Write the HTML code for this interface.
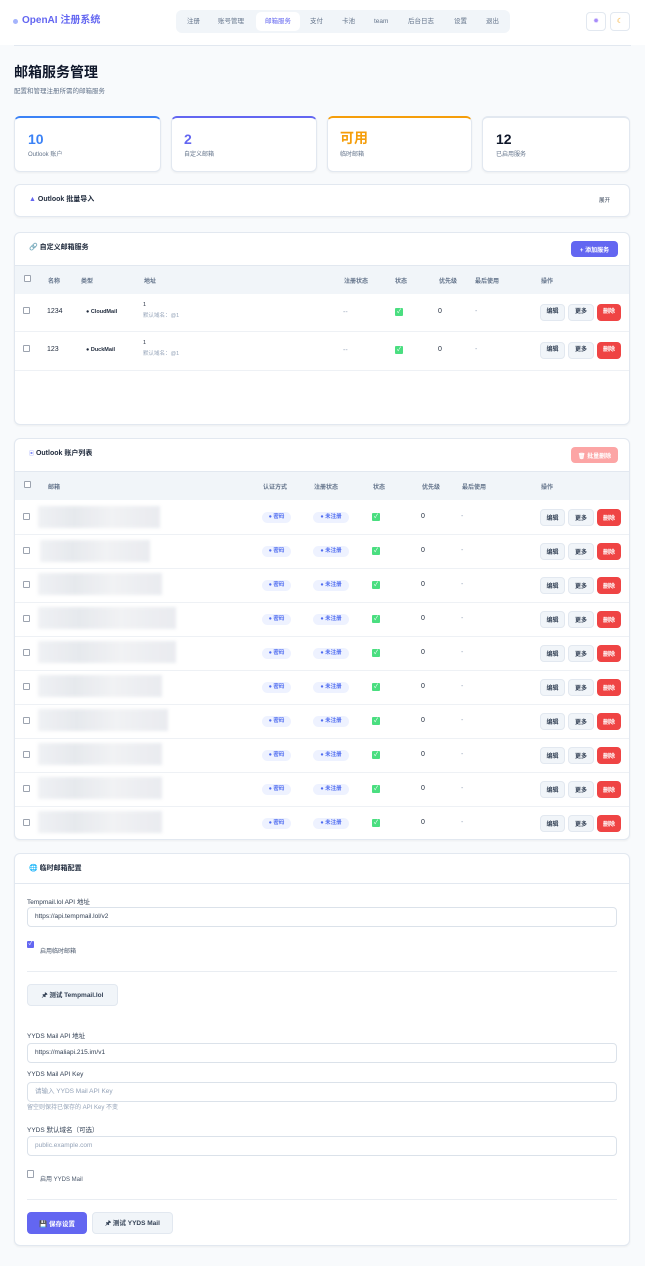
<!DOCTYPE html><html><head><meta charset="utf-8"><style>
*{box-sizing:border-box;margin:0;padding:0}
body{width:645px;height:1266px;background:#f8fafc;font-family:"Liberation Sans","Noto Sans CJK SC",sans-serif;color:#1e293b;position:relative;overflow:hidden;font-size:7px}
.a{position:absolute;white-space:nowrap;line-height:1.2}
.card{position:absolute;background:#fff;border:1px solid #e2e8f0;border-radius:6px;box-shadow:0 1px 2px rgba(0,0,0,.05)}
.th{position:absolute;font-size:6px;color:#64748b;font-weight:bold;white-space:nowrap}
.cb{position:absolute;width:7px;height:7px;border:1px solid #9ca3af;border-radius:1px;background:#fff}
.btn{position:absolute;height:17px;border-radius:4px;font-size:6px;font-weight:bold;display:flex;align-items:center;justify-content:center;white-space:nowrap}
.ed{background:#f1f5f9;border:1px solid #e2e8f0;color:#334155}
.del{background:#ef4444;color:#fff}
.chk{position:absolute;width:8px;height:8px;background:#4ade80;border-radius:1px;color:#fff;font-size:6px;line-height:8px;text-align:center}
.badge{position:absolute;height:11px;border-radius:6px;background:#eef2ff;color:#4f6cf0;font-size:5.5px;font-weight:bold;line-height:11px;text-align:center;white-space:nowrap}
.blur{position:absolute;height:22px;background:linear-gradient(90deg,#eef0f3,#e4e7ec 30%,#f0f1f3 60%,#e7e9ee);filter:blur(1.5px);opacity:.9}
.inp{position:absolute;left:27px;width:590px;height:20px;border:1px solid #dbe2ea;border-radius:4px;background:#fff;font-size:6.5px;padding-left:7px;line-height:18px;color:#334155;white-space:nowrap}
.lbl{position:absolute;left:27px;font-size:6.5px;color:#334155;white-space:nowrap}
.hr{position:absolute;left:27px;width:590px;height:1px;background:#e9edf2}
</style></head><body>
<div class="a" style="left:0;top:0;width:645px;height:45px;background:#fff"></div>
<div class="a" style="left:14px;top:45px;width:617px;height:1px;background:#e2e8f0"></div>
<div class="a" style="left:13px;top:19px;width:5px;height:5px;border-radius:50%;background:#a5b4fc"></div>
<div class="a" style="left:22px;top:15px;font-size:10px;font-weight:bold;color:#6366f1">OpenAI 注册系统</div>
<div class="a" style="left:176px;top:10px;width:334px;height:23px;background:#f1f5f9;border-radius:6px"></div>
<div class="a" style="left:256px;top:12px;width:44px;height:19px;background:#fff;border-radius:5px"></div>
<div class="a" style="top:18px;left:0;width:645px;height:10px;font-size:6.5px;color:#64748b">
<span class="a" style="left:187px;top:0">注册</span><span class="a" style="left:218px;top:0">账号管理</span><span class="a" style="left:265px;top:0;color:#6366f1">邮箱服务</span><span class="a" style="left:310px;top:0">支付</span><span class="a" style="left:342px;top:0">卡池</span><span class="a" style="left:374px;top:0">team</span><span class="a" style="left:408px;top:0">后台日志</span><span class="a" style="left:454px;top:0">设置</span><span class="a" style="left:486px;top:0">退出</span></div>
<div class="a" style="left:586px;top:12px;width:20px;height:19px;border:1px solid #e2e8f0;border-radius:4px;background:#fff;font-size:7px;text-align:center;line-height:17px;color:#a78bfa">✹</div>
<div class="a" style="left:610px;top:12px;width:20px;height:19px;border:1px solid #e2e8f0;border-radius:4px;background:#fff;font-size:7px;text-align:center;line-height:17px;color:#f59e0b">☾</div>

<div class="a" style="left:14px;top:64px;font-size:14px;font-weight:bold;color:#0f172a">邮箱服务管理</div>
<div class="a" style="left:14px;top:88px;font-size:6.5px;color:#64748b">配置和管理注册所需的邮箱服务</div>

<div class="card" style="left:14px;top:116px;width:147px;height:56px;border-top:2px solid #3b82f6"><div class="a" style="left:13px;top:13px;font-size:14px;font-weight:bold;color:#3b82f6">10</div><div class="a" style="left:13px;top:34px;font-size:6px;color:#64748b">Outlook 账户</div></div>
<div class="card" style="left:171px;top:116px;width:146px;height:56px;border-top:2px solid #6366f1"><div class="a" style="left:12px;top:13px;font-size:14px;font-weight:bold;color:#6366f1">2</div><div class="a" style="left:12px;top:34px;font-size:6px;color:#64748b">自定义邮箱</div></div>
<div class="card" style="left:327px;top:116px;width:145px;height:56px;border-top:2px solid #f59e0b"><div class="a" style="left:12px;top:12px;font-size:14px;font-weight:bold;color:#f59e0b">可用</div><div class="a" style="left:12px;top:34px;font-size:6px;color:#64748b">临时邮箱</div></div>
<div class="card" style="left:482px;top:116px;width:148px;height:56px;border-top:2px solid #e2e8f0"><div class="a" style="left:13px;top:13px;font-size:14px;font-weight:bold;color:#0f172a">12</div><div class="a" style="left:13px;top:34px;font-size:6px;color:#64748b">已启用服务</div></div>

<div class="card" style="left:14px;top:184px;width:616px;height:33px"><div class="a" style="left:14px;top:11px;font-size:7px;font-weight:bold;color:#1e293b"><span style="color:#6366f1">▲</span> Outlook 批量导入</div><div class="a" style="left:584px;top:13px;font-size:5.5px;color:#334155">展开</div></div>

<!-- custom -->
<div class="card" style="left:14px;top:232px;width:616px;height:193px;overflow:hidden">
<div class="a" style="left:14px;top:11px;font-size:7px;font-weight:bold"><span style="color:#c4b5fd">🔗</span> 自定义邮箱服务</div>
<div class="btn" style="left:556px;top:8px;width:47px;height:16px;background:#6366f1;color:#fff">+ 添加服务</div>
<div class="a" style="left:0;top:32px;width:616px;height:29px;background:#f1f5f9;border-top:1px solid #e2e8f0"></div>
<div class="cb" style="left:9px;top:42px"></div>
<div class="th" style="left:33px;top:43px">名称</div><div class="th" style="left:66px;top:43px">类型</div><div class="th" style="left:129px;top:43px">地址</div><div class="th" style="left:329px;top:43px">注册状态</div><div class="th" style="left:380px;top:43px">状态</div><div class="th" style="left:424px;top:43px">优先级</div><div class="th" style="left:460px;top:43px">最后使用</div><div class="th" style="left:526px;top:43px">操作</div>
<div class="a" style="left:0;top:98px;width:616px;height:1px;background:#eef1f5"></div>
<div class="a" style="left:0;top:137px;width:616px;height:1px;background:#eef1f5"></div>
</div>
<div class="a" style="left:0;top:0">
<div class="cb" style="left:23px;top:307px"></div><div class="a" style="left:47px;top:308px;font-size:7px">1234</div><div class="a" style="left:86px;top:309px;font-size:5.5px;font-weight:bold">● CloudMail</div><div class="a" style="left:143px;top:302px;font-size:5.5px">1</div><div class="a" style="left:143px;top:313px;font-size:5.5px;color:#94a3b8">默认域名：@1</div><div class="a" style="left:343px;top:309px;color:#94a3b8">--</div><div class="chk" style="left:395px;top:308px">✓</div><div class="a" style="left:438px;top:308px;font-size:7px">0</div><div class="a" style="left:475px;top:308px;color:#94a3b8">-</div>
<div class="btn ed" style="left:540px;top:304px;width:25px">编辑</div><div class="btn ed" style="left:568px;top:304px;width:26px">更多</div><div class="btn del" style="left:597px;top:304px;width:24px">删除</div>
<div class="cb" style="left:23px;top:345px"></div><div class="a" style="left:47px;top:346px;font-size:7px">123</div><div class="a" style="left:86px;top:347px;font-size:5.5px;font-weight:bold">● DuckMail</div><div class="a" style="left:143px;top:340px;font-size:5.5px">1</div><div class="a" style="left:143px;top:351px;font-size:5.5px;color:#94a3b8">默认域名：@1</div><div class="a" style="left:343px;top:347px;color:#94a3b8">--</div><div class="chk" style="left:395px;top:346px">✓</div><div class="a" style="left:438px;top:346px;font-size:7px">0</div><div class="a" style="left:475px;top:346px;color:#94a3b8">-</div>
<div class="btn ed" style="left:540px;top:342px;width:25px">编辑</div><div class="btn ed" style="left:568px;top:342px;width:26px">更多</div><div class="btn del" style="left:597px;top:342px;width:24px">删除</div>
</div>

<!-- outlook list -->
<div class="card" style="left:14px;top:438px;width:616px;height:402px;overflow:hidden">
<div class="a" style="left:14px;top:11px;font-size:7px;font-weight:bold"><span style="color:#818cf8;font-size:5px">▣</span> Outlook 账户列表</div>
<div class="btn" style="left:556px;top:8px;width:47px;height:16px;background:#fca5a5;color:#fff">🗑 批量删除</div>
<div class="a" style="left:0;top:32px;width:616px;height:29px;background:#f1f5f9;border-top:1px solid #e2e8f0"></div>
<div class="cb" style="left:9px;top:42px"></div>
<div class="th" style="left:33px;top:43px">邮箱</div><div class="th" style="left:248px;top:43px">认证方式</div><div class="th" style="left:299px;top:43px">注册状态</div><div class="th" style="left:358px;top:43px">状态</div><div class="th" style="left:407px;top:43px">优先级</div><div class="th" style="left:447px;top:43px">最后使用</div><div class="th" style="left:526px;top:43px">操作</div>
</div>
<div id="rows"></div>

<!-- temp config -->
<div class="card" style="left:14px;top:853px;width:616px;height:393px">
<div class="a" style="left:14px;top:11px;font-size:7px;font-weight:bold"><span style="color:#38bdf8">🌐</span> 临时邮箱配置</div>
<div class="a" style="left:0;top:29px;width:614px;height:1px;background:#e2e8f0"></div>
</div>
<div class="lbl" style="top:896px">Tempmail.lol API 地址</div>
<div class="inp" style="top:907px">https://api.tempmail.lol/v2</div>
<div class="a" style="left:27px;top:941px;width:7px;height:7px;background:#6366f1;border-radius:1px;color:#fff;font-size:6px;line-height:7px;text-align:center">✓</div>
<div class="a" style="left:40px;top:949px;font-size:6px;color:#475569">启用临时邮箱</div>
<div class="hr" style="top:971px"></div>
<div class="btn ed" style="left:27px;top:984px;width:91px;height:22px;font-size:6.5px">🖈 测试 Tempmail.lol</div>
<div class="lbl" style="top:1030px">YYDS Mail API 地址</div>
<div class="inp" style="top:1043px">https://maliapi.215.im/v1</div>
<div class="lbl" style="top:1071px">YYDS Mail API Key</div>
<div class="inp" style="top:1082px;color:#94a3b8">请输入 YYDS Mail API Key</div>
<div class="a" style="left:27px;top:1105px;font-size:6px;color:#94a3b8">留空则保持已保存的 API Key 不变</div>
<div class="lbl" style="top:1124px">YYDS 默认域名（可选）</div>
<div class="inp" style="top:1136px;color:#94a3b8">public.example.com</div>
<div class="cb" style="left:27px;top:1170px;width:7px;height:8px"></div>
<div class="a" style="left:40px;top:1177px;font-size:6px;color:#475569">启用 YYDS Mail</div>
<div class="hr" style="top:1199px"></div>
<div class="btn" style="left:27px;top:1212px;width:60px;height:22px;background:#6366f1;color:#fff;font-size:6.5px">💾 保存设置</div>
<div class="btn ed" style="left:92px;top:1212px;width:81px;height:22px;font-size:6.5px">🖈 测试 YYDS Mail</div>

<div class="a" style="left:0;top:0">
<div class="blur" style="left:38px;top:506px;width:122px"></div>
<div class="blur" style="left:40px;top:540px;width:110px"></div>
<div class="blur" style="left:38px;top:573px;width:124px"></div>
<div class="blur" style="left:38px;top:607px;width:138px"></div>
<div class="blur" style="left:38px;top:641px;width:138px"></div>
<div class="blur" style="left:38px;top:675px;width:124px"></div>
<div class="blur" style="left:38px;top:709px;width:130px"></div>
<div class="blur" style="left:38px;top:743px;width:124px"></div>
<div class="blur" style="left:38px;top:777px;width:124px"></div>
<div class="blur" style="left:38px;top:811px;width:124px"></div>
</div>
<script>
var h='';for(var i=0;i<10;i++){var y=500+i*34;
if(i>0)h+='<div class="a" style="left:15px;top:'+y+'px;width:614px;height:1px;background:#eef1f5"></div>';
h+='<div class="cb" style="left:23px;top:'+(y+13)+'px"></div>'+
'<div class="badge" style="left:262px;top:'+(y+12)+'px;width:29px">● 密码</div>'+
'<div class="badge" style="left:313px;top:'+(y+12)+'px;width:36px">● 未注册</div>'+
'<div class="chk" style="left:372px;top:'+(y+13)+'px">✓</div>'+
'<div class="a" style="left:421px;top:'+(y+13)+'px;font-size:7px">0</div>'+
'<div class="a" style="left:461px;top:'+(y+13)+'px;color:#94a3b8">-</div>'+
'<div class="btn ed" style="left:540px;top:'+(y+9)+'px;width:25px">编辑</div>'+
'<div class="btn ed" style="left:568px;top:'+(y+9)+'px;width:26px">更多</div>'+
'<div class="btn del" style="left:597px;top:'+(y+9)+'px;width:24px">删除</div>';}
document.getElementById('rows').innerHTML=h;
</script>
</body></html>
